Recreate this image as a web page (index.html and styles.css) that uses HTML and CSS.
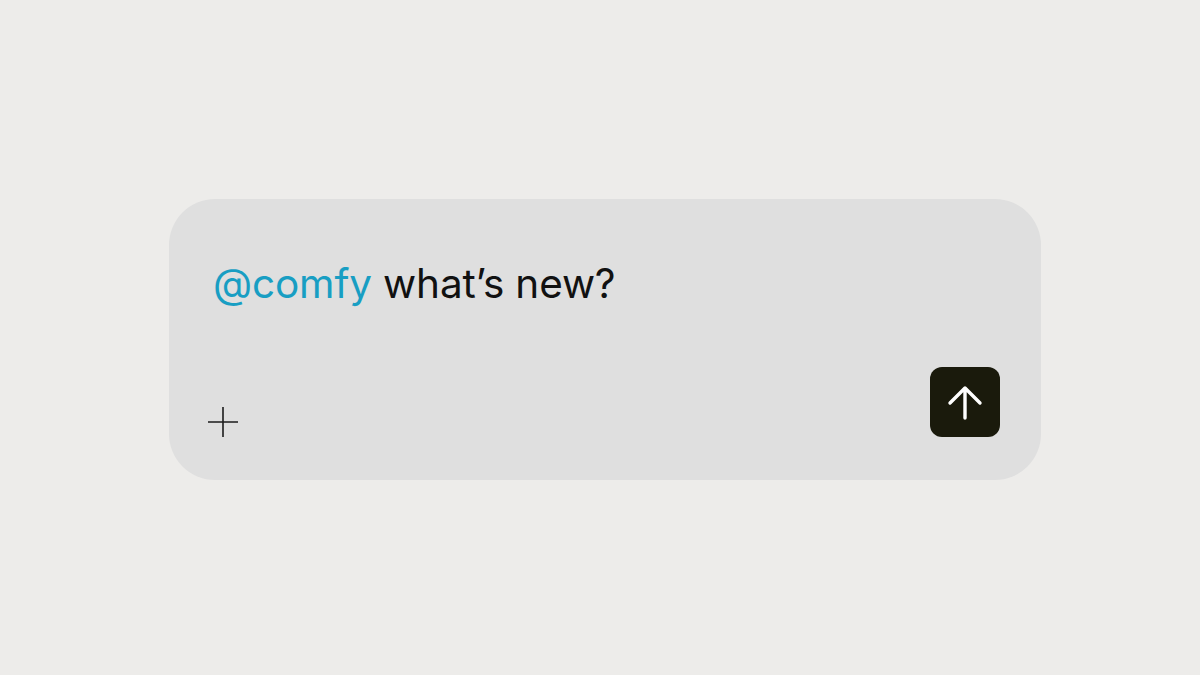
FILE: index.html
```html
<!DOCTYPE html>
<html>
<head>
<meta charset="utf-8">
<link rel="stylesheet" href="styles.css">
</head>
<body>
<div class="page">
  <div class="composer">
    <div class="prompt"><span class="mention">@comfy</span> what’s new?</div>
    <div class="actions">
      <svg class="plus" width="32" height="32" viewBox="0 0 32 32"><path d="M16 1V31M1 16H31" stroke="#1c1c1c" stroke-width="1.6" fill="none"/></svg>
      <button class="send">
        <svg width="40" height="40" viewBox="0 0 40 40"><path d="M20 36V6M5 21L20 6L35 21" stroke="#fff" stroke-width="3.4" fill="none" stroke-linecap="round" stroke-linejoin="round"/></svg>
      </button>
    </div>
  </div>
</div>
</body>
</html>
```
FILE: styles.css
```css
html, body { margin: 0; padding: 0; }
body { background: #edecea; font-family: Inter, "Liberation Sans", sans-serif; }
.page { width: 1200px; height: 675px; display: flex; align-items: center; justify-content: center; }
.composer {
  width: 872px; height: 281px; box-sizing: border-box;
  background: #dfdfdf; border-radius: 46px;
  padding: 55px 41px 42px 44px;
  display: flex; flex-direction: column; justify-content: space-between;
  margin: 4px 0 0 10px;
}
.prompt { font-size: 40.5px; color: #111; letter-spacing: -0.15px; line-height: 60px; }
.mention { color: #189ec3; }
.actions { display: flex; align-items: center; justify-content: space-between; }
.plus { margin-left: -6px; margin-top: 40px; }
.send {
  width: 70px; height: 70px; border: none; border-radius: 12px;
  background: #1a1a0c; display: flex; align-items: center; justify-content: center; padding: 0;
}
```
